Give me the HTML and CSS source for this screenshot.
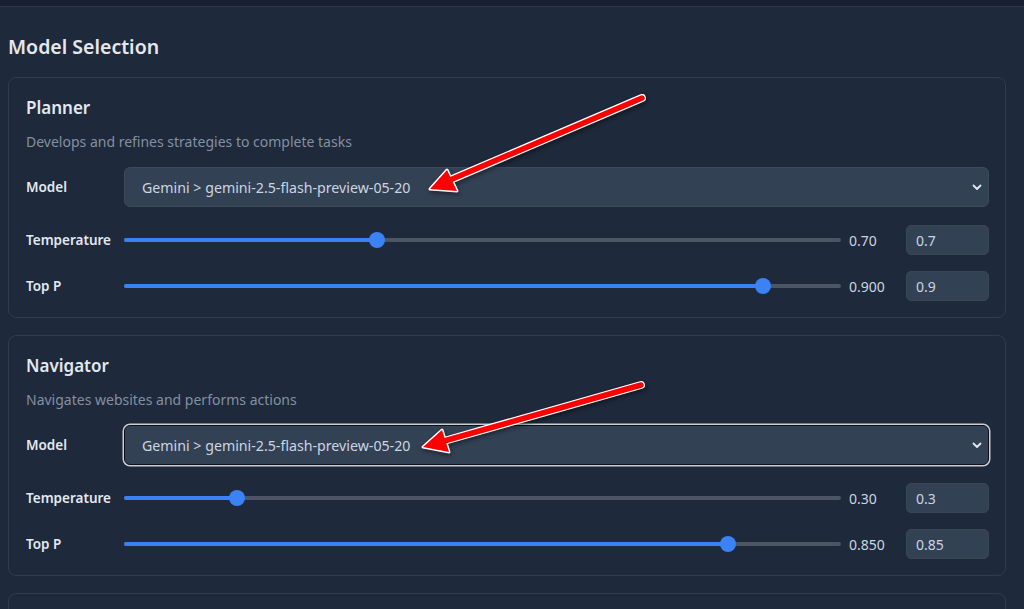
FILE: index.html
```html
<!DOCTYPE html>
<html lang="en">

<head>
    <meta charset="utf-8">
    <meta name="viewport" content="width=device-width, initial-scale=1.0">
    <title>Model Selection</title>

    <link rel="stylesheet" href="styles.css">
</head>

<body>
    <div class="topbar"></div>

    <main>
        <h1>Model Selection</h1>

        <section class="card">
            <h2>Planner</h2>
            <p class="desc">Develops and refines strategies to complete tasks</p>

            <div class="row model-row">
                <label>Model</label>
                <div class="select">
                    <span>Gemini &gt; gemini-2.5-flash-preview-05-20</span>
                    <svg width="10" height="7" viewBox="0 0 10 7"><path d="M1.5 1.5 L5 5 L8.5 1.5" fill="none" stroke="#e2e8f0" stroke-width="1.8" stroke-linecap="round" stroke-linejoin="round"/></svg>
                </div>
            </div>

            <div class="row slider-row">
                <label>Temperature</label>
                <div class="slider">
                    <div class="track">
                        <div class="fill" style="width: calc(8px + 35% * (100% - 16px) / 100%)"></div>
                    </div>
                    <div class="thumb" style="left: calc(35% * (100% - 16px) / 100%)"></div>
                </div>
                <span class="value">0.70</span>
                <div class="num">0.7</div>
            </div>

            <div class="row slider-row">
                <label>Top P</label>
                <div class="slider">
                    <div class="track">
                        <div class="fill" style="width: calc(8px + 90% * (100% - 16px) / 100%)"></div>
                    </div>
                    <div class="thumb" style="left: calc(90% * (100% - 16px) / 100%)"></div>
                </div>
                <span class="value">0.900</span>
                <div class="num">0.9</div>
            </div>
        </section>

        <section class="card">
            <h2>Navigator</h2>
            <p class="desc">Navigates websites and performs actions</p>

            <div class="row model-row">
                <label>Model</label>
                <div class="select focused">
                    <span>Gemini &gt; gemini-2.5-flash-preview-05-20</span>
                    <svg width="10" height="7" viewBox="0 0 10 7"><path d="M1.5 1.5 L5 5 L8.5 1.5" fill="none" stroke="#e2e8f0" stroke-width="1.8" stroke-linecap="round" stroke-linejoin="round"/></svg>
                </div>
            </div>

            <div class="row slider-row">
                <label>Temperature</label>
                <div class="slider">
                    <div class="track">
                        <div class="fill" style="width: calc(8px + 15% * (100% - 16px) / 100%)"></div>
                    </div>
                    <div class="thumb" style="left: calc(15% * (100% - 16px) / 100%)"></div>
                </div>
                <span class="value">0.30</span>
                <div class="num">0.3</div>
            </div>

            <div class="row slider-row">
                <label>Top P</label>
                <div class="slider">
                    <div class="track">
                        <div class="fill" style="width: calc(8px + 85% * (100% - 16px) / 100%)"></div>
                    </div>
                    <div class="thumb" style="left: calc(85% * (100% - 16px) / 100%)"></div>
                </div>
                <span class="value">0.850</span>
                <div class="num">0.85</div>
            </div>
        </section>

        <section class="card"></section>
    </main>

    <!-- annotation arrows drawn over the screenshot -->
    <svg class="arrows" width="1024" height="609" viewBox="0 0 1024 609">
        <g>
            <line x1="642" y1="98" x2="450" y2="180" stroke="#fff" stroke-width="8" stroke-linecap="round"/>
            <polygon points="430,189 447,170 457,191" fill="#fff" stroke="#fff" stroke-width="3" stroke-linejoin="round"/>
            <line x1="642" y1="98" x2="450" y2="180" stroke="#f00" stroke-width="5.5" stroke-linecap="round"/>
            <polygon points="430,189 447,170 457,191" fill="#f00"/>
        </g>
        <g>
            <line x1="641" y1="385" x2="444" y2="441" stroke="#fff" stroke-width="8" stroke-linecap="round"/>
            <polygon points="423,447 442,430 449,452" fill="#fff" stroke="#fff" stroke-width="3" stroke-linejoin="round"/>
            <line x1="641" y1="385" x2="444" y2="441" stroke="#f00" stroke-width="5.5" stroke-linecap="round"/>
            <polygon points="423,447 442,430 449,452" fill="#f00"/>
        </g>
    </svg>
</body>

</html>
```

FILE: styles.css
```css
* {
    box-sizing: border-box;
}

body {
    margin: 0;
    background-color: #1e293b;
    color: #e2e8f0;
    font-family: "Noto Sans", "Open Sans", sans-serif;
    font-size: 14px;
    position: relative;
    height: 609px;
    overflow: hidden;
}

.topbar {
    height: 7px;
    background-color: #172033;
    border-bottom: 1px solid #2b3649;
}

main {
    padding: 0 18px 0 8px;
}

h1 {
    margin: 26px 0 16px 0;
    font-size: 19.5px;
    line-height: 28px;
    font-weight: 600;
    color: #e5e7eb;
}

.card {
    border: 1px solid #2f3b4e;
    border-radius: 8px;
    padding: 16px 16px 16px 17px;
    margin-bottom: 17px;
    min-height: 60px;
}

h2 {
    margin: 0 0 10px 0;
    font-size: 17px;
    line-height: 28px;
    font-weight: 600;
    color: #e2e8f0;
}

.desc {
    margin: 0 0 15px 0;
    line-height: 20px;
    font-size: 14px;
    color: #8390a2;
}

.row {
    display: flex;
    align-items: center;
}

.row label {
    width: 98px;
    flex-shrink: 0;
    font-weight: 600;
    font-size: 13.5px;
    color: #e2e8f0;
}

.model-row {
    margin-bottom: 18px;
}

.select {
    flex: 1;
    height: 40px;
    display: flex;
    align-items: center;
    justify-content: space-between;
    padding: 0 6px 0 17px;
    background-color: #334155;
    border: 1px solid #3e4a5c;
    border-radius: 6px;
    color: #cbd5e1;
    font-size: 14.2px;
}

.select.focused {
    border-color: #0d1118;
    box-shadow: 0 0 0 1.5px #c9ced6;
}

.slider-row {
    height: 30px;
    margin-bottom: 16px;
}

.slider-row:last-child {
    margin-bottom: 0;
}

.slider {
    flex: 1;
    position: relative;
    height: 16px;
    display: flex;
    align-items: center;
}

.track {
    width: 100%;
    height: 4px;
    border-radius: 2px;
    background-color: #4b5563;
    overflow: hidden;
}

.fill {
    height: 100%;
    background-color: #3b82f6;
}

.thumb {
    position: absolute;
    top: 0;
    width: 16px;
    height: 16px;
    border-radius: 50%;
    background-color: #3b82f6;
}

.value {
    width: 57px;
    margin-left: 8px;
    color: #cbd5e1;
    font-size: 14px;
}

.num {
    width: 83px;
    height: 30px;
    line-height: 30px;
    padding-left: 9px;
    background-color: #334155;
    border: 1px solid #3a4557;
    border-radius: 5px;
    color: #cbd5e1;
    font-size: 14px;
}

.arrows {
    position: absolute;
    top: 0;
    left: 0;
    filter: drop-shadow(1px 2px 2px rgba(0, 0, 0, 0.45));
}
```
